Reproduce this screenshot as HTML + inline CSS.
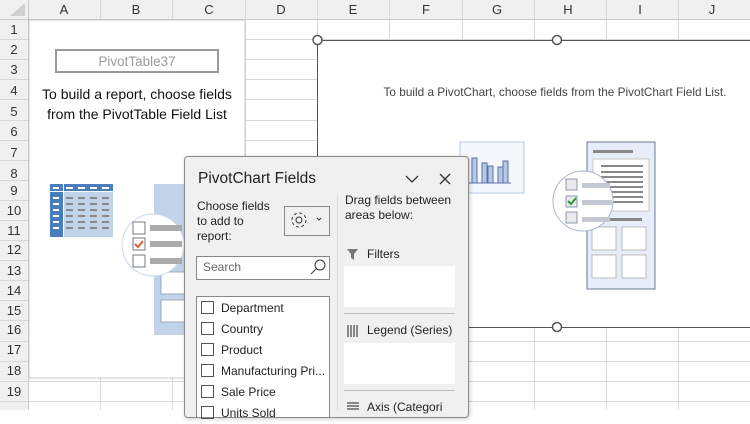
<!DOCTYPE html>
<html><head><style>
body{margin:0;width:750px;height:410px;overflow:hidden;background:#fff;font-family:"Liberation Sans",sans-serif;position:relative}
.a{position:absolute}
.t{position:absolute;white-space:nowrap}
</style></head><body>
<svg class="a" style="left:0;top:0" width="750" height="410">
<rect x="0" y="0" width="750" height="19" fill="#f0f0f0"/>
<rect x="0" y="0" width="28" height="410" fill="#f0f0f0"/>
<g stroke="#d8d8d8" stroke-width="1">
<line x1="100.5" y1="0" x2="100.5" y2="410"/><line x1="172.5" y1="0" x2="172.5" y2="410"/><line x1="245.5" y1="0" x2="245.5" y2="410"/><line x1="317.5" y1="0" x2="317.5" y2="410"/><line x1="389.5" y1="0" x2="389.5" y2="410"/><line x1="462.5" y1="0" x2="462.5" y2="410"/><line x1="534.5" y1="0" x2="534.5" y2="410"/><line x1="606.5" y1="0" x2="606.5" y2="410"/><line x1="678.5" y1="0" x2="678.5" y2="410"/>
<line x1="0" y1="39.5" x2="750" y2="39.5"/><line x1="0" y1="59.5" x2="750" y2="59.5"/><line x1="0" y1="79.5" x2="750" y2="79.5"/><line x1="0" y1="99.5" x2="750" y2="99.5"/><line x1="0" y1="120.5" x2="750" y2="120.5"/><line x1="0" y1="140.5" x2="750" y2="140.5"/><line x1="0" y1="160.5" x2="750" y2="160.5"/><line x1="0" y1="180.5" x2="750" y2="180.5"/><line x1="0" y1="200.5" x2="750" y2="200.5"/><line x1="0" y1="220.5" x2="750" y2="220.5"/><line x1="0" y1="240.5" x2="750" y2="240.5"/><line x1="0" y1="260.5" x2="750" y2="260.5"/><line x1="0" y1="280.5" x2="750" y2="280.5"/><line x1="0" y1="300.5" x2="750" y2="300.5"/><line x1="0" y1="320.5" x2="750" y2="320.5"/><line x1="0" y1="341.5" x2="750" y2="341.5"/><line x1="0" y1="361.5" x2="750" y2="361.5"/><line x1="0" y1="381.5" x2="750" y2="381.5"/><line x1="0" y1="401.5" x2="750" y2="401.5"/>
</g>
<line x1="0" y1="19.5" x2="750" y2="19.5" stroke="#c8c8c8"/>
<line x1="28.5" y1="0" x2="28.5" y2="410" stroke="#c8c8c8"/>
<polygon points="10,16 25,16 25,3" fill="#d0d0d0"/>
<rect x="29" y="20" width="216" height="358" fill="#fff" stroke="#c8c8c8"/>
<g font-family="Liberation Sans" font-size="13" fill="#333" text-anchor="middle">
<text x="64" y="14">A</text><text x="136" y="14">B</text><text x="209" y="14">C</text><text x="281" y="14">D</text><text x="353" y="14">E</text><text x="426" y="14">F</text><text x="497" y="14">G</text><text x="568" y="14">H</text><text x="640" y="14">I</text><text x="712" y="14">J</text>
<text x="14" y="34">1</text><text x="14" y="54">2</text><text x="14" y="74">3</text><text x="14" y="95">4</text><text x="14" y="116">5</text><text x="14" y="136">6</text><text x="14" y="157">7</text><text x="14" y="195">9</text><text x="14" y="178">8</text><text x="14" y="215">10</text><text x="14" y="235">11</text><text x="14" y="254">12</text><text x="14" y="275">13</text><text x="14" y="295">14</text><text x="14" y="315">15</text><text x="14" y="334">16</text><text x="14" y="354">17</text><text x="14" y="375">18</text><text x="14" y="396">19</text>
</g>
<rect x="56" y="50" width="162" height="22" fill="#fff" stroke="#9a9a9a" stroke-width="2"/>
<text x="137" y="66" text-anchor="middle" font-size="13.5" fill="#9a9a9a">PivotTable37</text>
<text x="137" y="99" text-anchor="middle" font-size="14" fill="#111">To build a report, choose fields</text>
<text x="137" y="119" text-anchor="middle" font-size="14" fill="#111">from the PivotTable Field List</text>
<rect x="50" y="184" width="63" height="53" fill="#c0d3e8"/>
<rect x="50" y="184" width="13" height="53" fill="#4a7dbb"/>
<rect x="50" y="184" width="63" height="7" fill="#4a7dbb"/>
<line x1="63.5" y1="184" x2="63.5" y2="237" stroke="#fff"/>
<line x1="50" y1="191.5" x2="113" y2="191.5" stroke="#fff"/>
<g fill="#fff"><rect x="53" y="187" width="6" height="2"/><rect x="66" y="187" width="7" height="2"/><rect x="78" y="187" width="7" height="2"/><rect x="90" y="187" width="7" height="2"/><rect x="102" y="187" width="7" height="2"/><rect x="53" y="197" width="6" height="2"/><rect x="53" y="203" width="6" height="2"/><rect x="53" y="209" width="6" height="2"/><rect x="53" y="215" width="6" height="2"/><rect x="53" y="221" width="6" height="2"/><rect x="53" y="227" width="6" height="2"/></g>
<g fill="#888"><rect x="66" y="197" width="7" height="2"/><rect x="78" y="197" width="7" height="2"/><rect x="90" y="197" width="7" height="2"/><rect x="102" y="197" width="7" height="2"/><rect x="66" y="203" width="7" height="2"/><rect x="78" y="203" width="7" height="2"/><rect x="90" y="203" width="7" height="2"/><rect x="102" y="203" width="7" height="2"/><rect x="66" y="209" width="7" height="2"/><rect x="78" y="209" width="7" height="2"/><rect x="90" y="209" width="7" height="2"/><rect x="102" y="209" width="7" height="2"/><rect x="66" y="215" width="7" height="2"/><rect x="78" y="215" width="7" height="2"/><rect x="90" y="215" width="7" height="2"/><rect x="102" y="215" width="7" height="2"/><rect x="66" y="221" width="7" height="2"/><rect x="78" y="221" width="7" height="2"/><rect x="90" y="221" width="7" height="2"/><rect x="102" y="221" width="7" height="2"/><rect x="66" y="227" width="7" height="2"/><rect x="78" y="227" width="7" height="2"/><rect x="90" y="227" width="7" height="2"/><rect x="102" y="227" width="7" height="2"/></g>
<rect x="154" y="184" width="32" height="151" fill="#c0d3e8"/>
<rect x="161" y="272" width="25" height="22" fill="#fff" stroke="#9ab"/>
<rect x="161" y="300" width="25" height="22" fill="#fff" stroke="#9ab"/>
<circle cx="153" cy="245" r="31" fill="#fff" stroke="#c8d8ea"/>
<rect x="133" y="222" width="12" height="12" fill="#fff" stroke="#777"/><rect x="150" y="225" width="32" height="6" fill="#aaa"/>
<rect x="133" y="238" width="12" height="12" fill="#fff" stroke="#777"/><rect x="150" y="241" width="32" height="6" fill="#aaa"/>
<path d="M135 244 l3 3 l5 -6" stroke="#d9603a" stroke-width="2" fill="none"/>
<rect x="133" y="255" width="12" height="12" fill="#fff" stroke="#777"/><rect x="150" y="258" width="32" height="6" fill="#aaa"/>
<rect x="317.5" y="40.5" width="440" height="287" fill="#fff" stroke="#555"/>
<text x="555" y="96" text-anchor="middle" font-size="11.8" fill="#444">To build a PivotChart, choose fields from the PivotChart Field List.</text>
<rect x="460" y="142" width="64" height="51" fill="#f4f7fc" stroke="#b8c8e0"/>
<g fill="#b7c8e4" stroke="#5a72a8"><rect x="472" y="158" width="5" height="25"/><rect x="482" y="163" width="5" height="20"/><rect x="488" y="166" width="5" height="17"/><rect x="498" y="167" width="5" height="16"/><rect x="503" y="161" width="5" height="22"/></g>
<line x1="465" y1="183" x2="511" y2="183" stroke="#5a72a8"/>
<rect x="587" y="142" width="68" height="147" fill="#e6edf9" stroke="#6a7a94"/>
<rect x="593" y="159" width="56" height="52" fill="#fff" stroke="#c8c8c8"/>
<g fill="#888"><rect x="601" y="165" width="42" height="2"/><rect x="601" y="171" width="42" height="2"/><rect x="601" y="176" width="42" height="2"/><rect x="601" y="181" width="42" height="2"/><rect x="601" y="186" width="42" height="2"/><rect x="601" y="191" width="42" height="2"/><rect x="601" y="196" width="42" height="2"/><rect x="601" y="201" width="42" height="2"/><rect x="593" y="150" width="40" height="3"/><rect x="610" y="218" width="32" height="3"/></g>
<g fill="#fff" stroke="#bbb"><rect x="592" y="227" width="24" height="23"/><rect x="622" y="227" width="24" height="23"/><rect x="592" y="255" width="24" height="23"/><rect x="622" y="255" width="24" height="23"/></g>
<circle cx="583" cy="201" r="30" fill="#fff" stroke="#a8b6cc"/>
<g fill="#e8eaee" stroke="#8a9aaa"><rect x="566" y="179" width="11" height="11"/><rect x="566" y="196" width="11" height="11"/><rect x="566" y="212" width="11" height="11"/></g>
<g fill="#c4c8d4"><rect x="582" y="183" width="28" height="5"/><rect x="582" y="200" width="30" height="5"/><rect x="582" y="217" width="28" height="5"/></g>
<path d="M568 201 l3 3 l5 -6" stroke="#2a9a2a" stroke-width="2" fill="none"/>
<g fill="#fff" stroke="#555" stroke-width="1.5"><circle cx="317.5" cy="40" r="4.5"/><circle cx="557" cy="40" r="4.5"/><circle cx="317.5" cy="327" r="4.5"/><circle cx="557" cy="327" r="4.5"/></g>
</svg>
<div class="a" style="left:184px;top:156px;width:283px;height:260px;background:#f0f0f0;border:1px solid #8a8a8a;border-radius:4px;box-shadow:1px 1px 4px rgba(0,0,0,.2)"></div>
<div class="t" style="left:198px;top:170px;font-size:15.5px;color:#222">PivotChart Fields</div>
<svg class="a" style="left:400px;top:170px" width="60" height="20"><path d="M6 6 l6 6 l6 -6" stroke="#333" fill="none" stroke-width="1.3"/><path d="M40 4 l10 10 M50 4 l-10 10" stroke="#333" stroke-width="1.3"/></svg>
<div class="a" style="left:337px;top:195px;width:1px;height:215px;background:#ddd"></div>
<div class="t" style="left:197px;top:199px;font-size:12px;line-height:15px;color:#222">Choose fields<br>to add to<br>report:</div>
<div class="a" style="left:284px;top:206px;width:44px;height:28px;border:1px solid #888;background:#f0f0f0"></div>
<svg class="a" style="left:290px;top:210px" width="36" height="22"><circle cx="9" cy="10" r="3" fill="none" stroke="#333"/><circle cx="9" cy="10" r="7" fill="none" stroke="#333" stroke-dasharray="3 2.5"/><path d="M27 8 l2 2 l2 -2" stroke="#333" fill="none"/></svg>
<div class="a" style="left:196px;top:256px;width:132px;height:22px;border:1px solid #888;background:#fff"></div>
<div class="t" style="left:203px;top:260px;font-size:12px;color:#666">Search</div>
<svg class="a" style="left:309px;top:258px" width="18" height="18"><circle cx="11" cy="7" r="5" fill="none" stroke="#333"/><path d="M7 11 l-5 5" stroke="#333"/></svg>
<div class="a" style="left:196px;top:296px;width:132px;height:120px;border:1px solid #888;background:#fff"></div>
<div class="a" style="left:201px;top:298px;font-size:12px;color:#222;line-height:21px">
<div><span style="display:inline-block;width:11px;height:11px;border:1px solid #555;vertical-align:-2px;margin-right:7px"></span>Department</div>
<div><span style="display:inline-block;width:11px;height:11px;border:1px solid #555;vertical-align:-2px;margin-right:7px"></span>Country</div>
<div><span style="display:inline-block;width:11px;height:11px;border:1px solid #555;vertical-align:-2px;margin-right:7px"></span>Product</div>
<div style="white-space:nowrap"><span style="display:inline-block;width:11px;height:11px;border:1px solid #555;vertical-align:-2px;margin-right:7px"></span>Manufacturing Pri...</div>
<div><span style="display:inline-block;width:11px;height:11px;border:1px solid #555;vertical-align:-2px;margin-right:7px"></span>Sale Price</div>
<div><span style="display:inline-block;width:11px;height:11px;border:1px solid #555;vertical-align:-2px;margin-right:7px"></span>Units Sold</div>
</div>
<div class="t" style="left:345px;top:193px;font-size:12px;line-height:15px;color:#222">Drag fields between<br>areas below:</div>
<svg class="a" style="left:346px;top:248px" width="14" height="14"><path d="M1 1 h11 l-4 5 v6 l-3 -2 v-4 z" fill="#777"/></svg>
<div class="t" style="left:367px;top:247px;font-size:12px;color:#222">Filters</div>
<div class="a" style="left:344px;top:266px;width:111px;height:41px;background:#fff"></div>
<div class="a" style="left:344px;top:313px;width:111px;height:1px;background:#bbb"></div>
<svg class="a" style="left:347px;top:325px" width="14" height="12"><g fill="#888"><rect x="0" y="0" width="2" height="12"/><rect x="3" y="0" width="2" height="12"/><rect x="6" y="0" width="2" height="12"/><rect x="9" y="0" width="2" height="12"/></g></svg>
<div class="t" style="left:367px;top:323px;font-size:12px;color:#222">Legend (Series)</div>
<div class="a" style="left:344px;top:343px;width:111px;height:41px;background:#fff"></div>
<div class="a" style="left:344px;top:390px;width:111px;height:1px;background:#bbb"></div>
<svg class="a" style="left:347px;top:402px" width="14" height="10"><g fill="#888"><rect x="0" y="0" width="12" height="2"/><rect x="0" y="3" width="12" height="2"/><rect x="0" y="6" width="12" height="2"/></g></svg>
<div class="t" style="left:367px;top:400px;font-size:12px;color:#222">Axis (Categori</div>
</body></html>
